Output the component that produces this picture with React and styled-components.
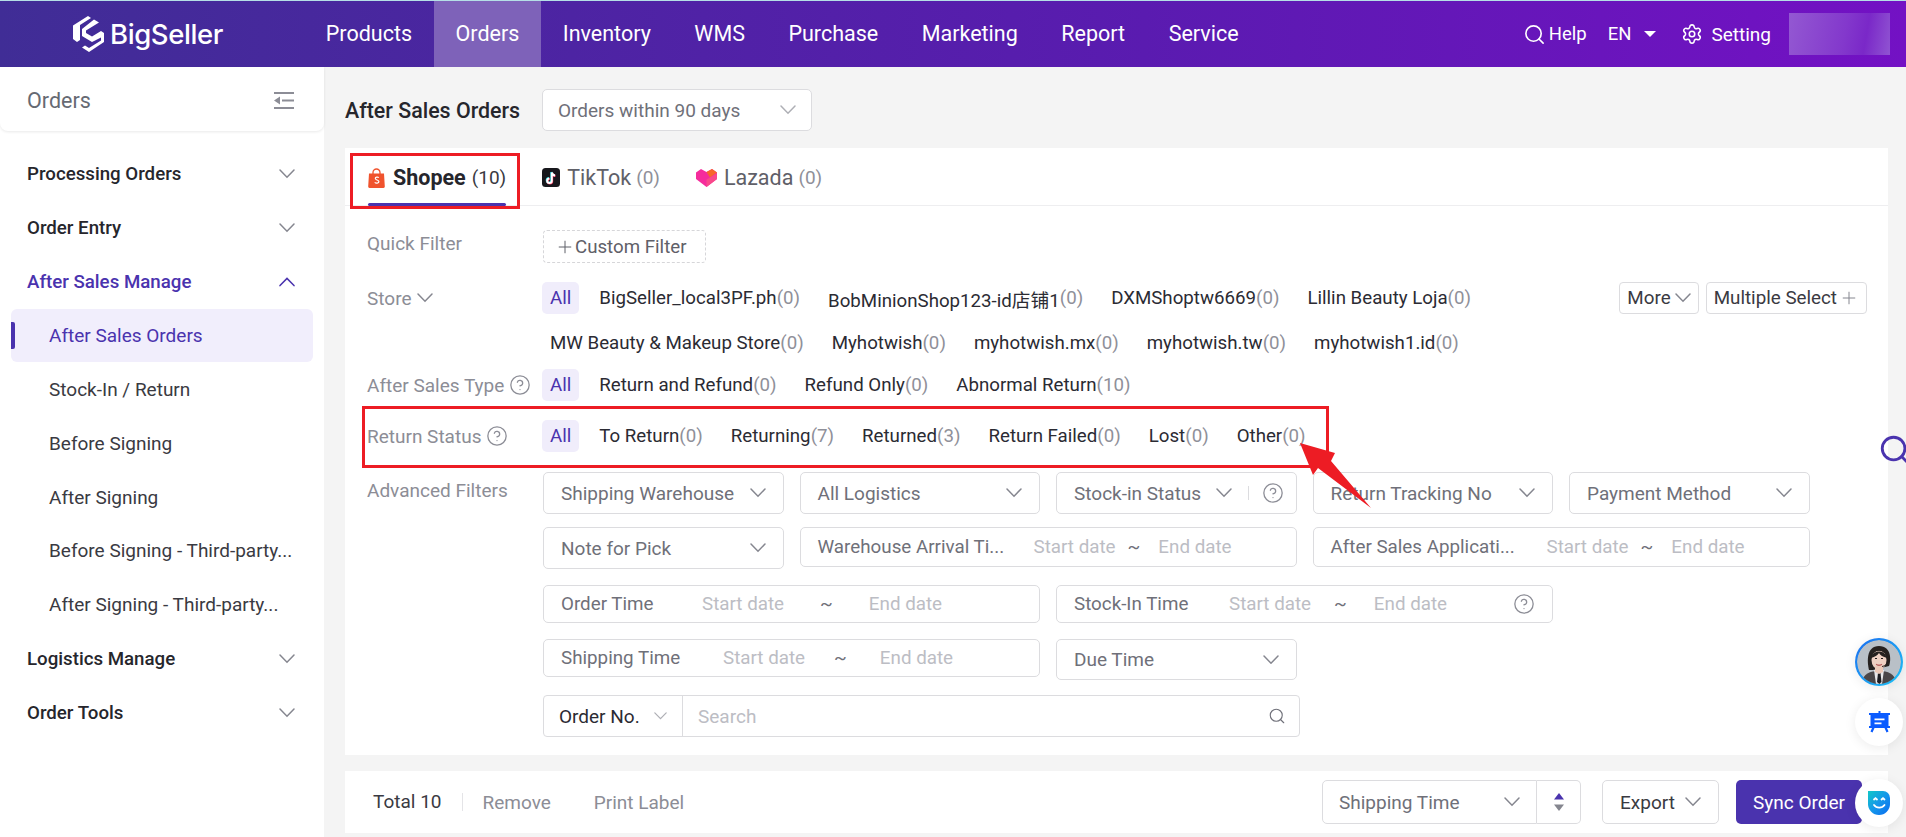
import React from 'react';
import styled, { createGlobalStyle } from 'styled-components';
import { Search, Settings, CircleHelp, Plus } from 'lucide-react';

const GlobalStyle = createGlobalStyle`
  html, body {
    margin: 0;
    padding: 0;
    background: #f4f4f4;
    font-family: Roboto, "Noto Sans CJK SC", sans-serif;
    font-size: 19px;
    color: #2b2b33;
  }
  * {
    box-sizing: border-box;
  }
`;

const Page = styled.div`
  position: relative;
  width: 1906px;
  height: 837px;
  overflow: hidden;
  background: #f4f4f4;
`;

const Header = styled.header`
  display: flex;
  align-items: stretch;
  height: 67px;
  border-top: 1px solid #b5dfe6;
  background: linear-gradient(90deg, #402d96 0%, #5a1bb0 60%, #7311c4 100%);
  color: #fff;
`;

const Logo = styled.div`
  display: flex;
  align-items: center;
  gap: 6px;
  width: 304px;
  padding: 0 0 0 73px;
`;

const LogoText = styled.span`
  font-family: Inter, sans-serif;
  font-size: 27.5px;
  font-weight: 500;
  letter-spacing: -0.4px;
  color: #fff;
`;

const Nav = styled.nav`
  display: flex;
  flex: 1;
`;

const NavItem = styled.a`
  display: flex;
  align-items: center;
  padding: 0 21.75px 2px;
  font-size: 21.5px;
  color: #fff;
  background: ${(p) => (p.$active ? '#7e62b9' : 'transparent')};
`;

const HeaderRight = styled.div`
  display: flex;
  align-items: center;
  padding-right: 16px;
`;

const HeaderLink = styled.span`
  display: flex;
  align-items: center;
  gap: ${(p) => p.$gap || 5}px;
  margin-right: ${(p) => p.$mr || 0}px;
  font-size: ${(p) => p.$size || 18.5}px;
`;

const Caret = styled.i`
  width: 0;
  height: 0;
  margin-left: 8px;
  border-left: 6px solid transparent;
  border-right: 6px solid transparent;
  border-top: 6px solid #fff;
`;

const Blurred = styled.div`
  width: 101px;
  height: 42px;
  background: linear-gradient(100deg, #9358d2 0%, #8338cc 55%, #7a28c8 75%, #9054d2 100%);
`;

const Body = styled.div`
  display: flex;
  height: 770px;
`;

const Sidebar = styled.aside`
  width: 324px;
  flex-shrink: 0;
  background: #fff;
`;

const SideHead = styled.div`
  display: flex;
  align-items: center;
  justify-content: space-between;
  height: 64px;
  padding: 2px 30px 0 27px;
  border-radius: 0 0 8px 8px;
  box-shadow: 0 1px 3px rgba(0, 0, 0, 0.09);
  font-size: 21.5px;
  color: #666a73;
`;

const SideMenu = styled.div`
  padding-top: 16px;
`;

const MenuGroup = styled.div`
  display: flex;
  align-items: center;
  justify-content: space-between;
  height: 54px;
  padding: 0 29px 0 27px;
  font-size: 18.7px;
  font-weight: 500;
  color: ${(p) => (p.$open ? '#4a33ae' : '#26262c')};
`;

const MenuItem = styled.div`
  position: relative;
  display: flex;
  align-items: center;
  height: 53px;
  margin: 0 11px 0.85px;
  padding-left: 38px;
  border-radius: 6px;
  font-size: 19px;
  color: ${(p) => (p.$active ? '#4a33ae' : '#3a3a42')};
  background: ${(p) => (p.$active ? '#f1eefc' : 'transparent')};

  &::before {
    content: '';
    display: ${(p) => (p.$active ? 'block' : 'none')};
    position: absolute;
    left: 0;
    top: 13px;
    width: 4px;
    height: 27px;
    border-radius: 0 2px 2px 0;
    background: #4a33ae;
  }
`;

const Content = styled.main`
  flex: 1;
  padding: 22px 18px 0 21px;
`;

const TitleRow = styled.div`
  display: flex;
  align-items: center;
  height: 42px;
  margin-bottom: 17px;
`;

const Title = styled.h1`
  width: 197px;
  margin: 0;
  font-size: 21.4px;
  font-weight: 500;
  color: #26262c;
  white-space: nowrap;
`;

const Select = styled.div`
  display: flex;
  align-items: center;
  justify-content: space-between;
  flex-shrink: 0;
  width: ${(p) => p.$width || 'auto'};
  height: ${(p) => p.$height || 42}px;
  padding: 0 ${(p) => p.$pad || 17}px;
  border: 1px solid #dcdcdf;
  border-radius: ${(p) => (p.$joined ? '5px 0 0 5px' : '5px')};
  background: #fff;
  font-size: 19px;
  color: ${(p) => p.$color || '#6f7079'};
  white-space: nowrap;
`;

const Card = styled.section`
  background: #fff;
  height: 607px;
  margin-bottom: 16px;
`;

const Tabs = styled.div`
  display: flex;
  height: 58px;
  padding-left: 23px;
  border-bottom: 1px solid #eeeef0;
`;

const Tab = styled.div`
  position: relative;
  display: flex;
  align-items: center;
  gap: ${(p) => (p.$active ? 8 : 7)}px;
  padding-top: 2px;
  margin-right: ${(p) => p.$mr}px;
  font-size: 21.5px;
  font-weight: ${(p) => (p.$active ? 700 : 400)};
  color: ${(p) => (p.$active ? '#26262c' : '#5f6068')};

  &::after {
    content: '';
    display: ${(p) => (p.$active ? 'block' : 'none')};
    position: absolute;
    left: 0;
    right: 0;
    bottom: -1px;
    height: 3px;
    border-radius: 2px;
    background: #4a33ae;
  }
`;

const TabCount = styled.span`
  margin-left: -2px;
  font-size: 19px;
  font-weight: 400;
  color: ${(p) => (p.$active ? '#3a3a42' : '#8f9099')};
`;

const Filters = styled.div`
  padding: 0 0 0 22px;
`;

const FilterRow = styled.div`
  display: flex;
  align-items: flex-start;
  margin-top: ${(p) => p.$top}px;
`;

const Label = styled.div`
  display: flex;
  align-items: center;
  gap: 5px;
  flex-shrink: 0;
  width: 175px;
  height: ${(p) => p.$height || 32}px;
  font-size: 19px;
  color: #8c8d96;
`;

const Options = styled.div`
  display: flex;
  flex-wrap: wrap;
  flex: 1;
  gap: 13px 12px;
`;

const Option = styled.span`
  display: flex;
  align-items: center;
  height: 32px;
  padding: 0 8px;
  border-radius: 5px;
  font-size: 18.7px;
  white-space: nowrap;
  color: ${(p) => (p.$active ? '#4a33ae' : '#2b2b33')};
  background: ${(p) => (p.$active ? '#f0edfb' : 'transparent')};
`;

const Count = styled.span`
  color: #8f9099;
`;

const DashedButton = styled.div`
  display: flex;
  align-items: center;
  height: 33px;
  margin-left: 1px;
  padding: 0 18px 0 11px;
  border: 1px dashed #d6d6d9;
  border-radius: 4px;
  font-size: 18.7px;
  color: #5f6068;
`;

const StoreActions = styled.div`
  display: flex;
  gap: 7px;
  margin-right: 21px;
`;

const SmallButton = styled.div`
  display: flex;
  align-items: center;
  gap: ${(p) => p.$gap || 2}px;
  height: 32px;
  padding: 0 7px;
  border: 1px solid #dcdcdf;
  border-radius: 4px;
  font-size: 18.8px;
  color: #3a3a42;
  white-space: nowrap;
`;

const AdvancedRow = styled.div`
  display: flex;
  margin-top: 20px;
`;

const AdvancedGrid = styled.div`
  display: grid;
  grid-template-columns: repeat(5, 240.5px);
  grid-template-rows: 55px 58px 54px 56px 42px;
  column-gap: 16px;
  margin-left: 1px;
  align-items: start;
`;

const DateField = styled.div`
  grid-column: span 2;
  display: flex;
  align-items: center;
  height: ${(p) => p.$height}px;
  padding: 0 17px;
  border: 1px solid #dcdcdf;
  border-radius: 5px;
  font-size: 18.8px;
  white-space: nowrap;
`;

const DateLabel = styled.span`
  flex-shrink: 0;
  width: ${(p) => p.$width}px;
  color: #6f7079;
`;

const Placeholder = styled.span`
  color: #bcbdc4;
`;

const Tilde = styled.span`
  margin: 0 ${(p) => p.$after}px 0 ${(p) => p.$before}px;
  color: #6f7079;
`;

const HelpSlot = styled.span`
  display: flex;
  margin-left: auto;
  color: #8c8d96;
`;

const StockSelect = styled.div`
  display: flex;
  align-items: center;
  height: 42px;
  padding: 0 0 0 17px;
  border: 1px solid #dcdcdf;
  border-radius: 5px;
  font-size: 19px;
  color: #6f7079;
  white-space: nowrap;
`;

const StockChevron = styled.span`
  display: flex;
  margin-left: 15px;
`;

const TinyDivider = styled.i`
  width: 1px;
  height: 14px;
  margin: 0 13px 0 16px;
  background: #dcdcdf;
`;

const SearchBar = styled.div`
  grid-column: span 3;
  display: flex;
  align-items: center;
  width: 757px;
  height: 42px;
  border: 1px solid #dcdcdf;
  border-radius: 4px;
  font-size: 19px;
`;

const SearchType = styled.div`
  display: flex;
  align-items: center;
  justify-content: space-between;
  width: 139px;
  height: 100%;
  padding: 0 15px;
  border-right: 1px solid #dcdcdf;
  color: #2b2b33;
`;

const SearchInput = styled.div`
  display: flex;
  align-items: center;
  justify-content: space-between;
  flex: 1;
  padding: 0 13px 0 15px;
  color: #bcbdc4;
`;

const Toolbar = styled.section`
  display: flex;
  align-items: center;
  height: 62px;
  padding: 0 26px 0 28px;
  background: #fff;
  font-size: 19px;
`;

const Total = styled.span`
  padding-right: 20px;
  margin-right: 20px;
  color: #3a3a42;
  border-right: 1px solid #e4e4e7;
  line-height: 18px;
`;

const ToolbarLink = styled.span`
  margin-right: 43px;
  color: #8c8d96;
`;

const ToolbarRight = styled.div`
  display: flex;
  align-items: center;
  margin-left: auto;
`;

const SortBox = styled.div`
  display: flex;
  align-items: center;
  justify-content: center;
  width: 44px;
  height: 44px;
  margin-right: 21px;
  border: 1px solid #dcdcdf;
  border-left: 0;
  border-radius: 0 5px 5px 0;
`;

const ExportButton = styled(Select)`
  width: 117px;
  height: 44px;
  margin-right: 17px;
  color: #3a3a42;
`;

const SyncButton = styled.button`
  width: 126px;
  height: 44px;
  padding: 0 0 0 17px;
  border: 0;
  border-radius: 5px;
  background: #4a33ae;
  font-family: inherit;
  font-size: 19px;
  color: #fff;
  text-align: left;
`;

const RedBox = styled.div`
  position: absolute;
  left: ${(p) => p.$x}px;
  top: ${(p) => p.$y}px;
  width: ${(p) => p.$w}px;
  height: ${(p) => p.$h}px;
  border: 3px solid #ed1c24;
`;

const ArrowSvg = styled.svg`
  position: absolute;
  left: 1290px;
  top: 435px;
`;

const PageSearch = styled.div`
  position: absolute;
  left: 1878px;
  top: 433px;
  color: #4a33ae;
`;

const Floating = styled.div`
  position: absolute;
  left: ${(p) => p.$x}px;
  top: ${(p) => p.$y}px;
  display: flex;
  align-items: center;
  justify-content: center;
  width: 48px;
  height: 48px;
  border-radius: 50%;
  background: #fff;
  box-shadow: 0 2px 12px rgba(0, 0, 0, 0.08);
  overflow: hidden;
`;

const AvatarRing = styled(Floating)`
  background: linear-gradient(135deg, #1a6cf0, #1fc4f5);
  padding: 2px;
`;

const AvatarSvg = styled.svg`
  border-radius: 50%;
  filter: blur(0.4px);
`;

const ChevronSvg = styled.svg`
  flex-shrink: 0;
  fill: none;
  stroke: ${(p) => p.$color || '#85868f'};
  stroke-width: 1.5;
  stroke-linecap: round;
`;

const Chevron = ({ w = 16, color, up }) => (
  <ChevronSvg $color={color} width={w} height={w * 0.6} viewBox="0 0 16 9.6">
    <path d={up ? 'M1 8.6 8 1.4l7 7.2' : 'M1 1l7 7.2L15 1'} />
  </ChevronSvg>
);

const LogoMark = () => (
  <svg width="31" height="36" viewBox="0 0 31 36">
    <path fill="#fff" d="M15 0 18 2 7 9v15l-3 2-4-3V9.500Z" />
    <path fill="#fff" d="M21 3.500 26 6.500 13 14.500v2.500l6 3.500L28 15l3 2v9l-15 10-7-4.500 3-2 4 2.500 12-7.500v-3L19 26l-10-6V13Z" />
  </svg>
);

const ShopeeIcon = () => (
  <svg width="17" height="20" viewBox="0 0 17 20">
    <path fill="none" stroke="#f0532d" strokeWidth="1.3" d="M5 6V4.500a3.500 3.500 0 0 1 7 0V6" />
    <path fill="#f0532d" d="M1 5.500h15l.8 13a1.300 1.300 0 0 1-1.300 1.400h-14A1.300 1.300 0 0 1 .2 18.500Z" />
    <path fill="none" stroke="#fff" strokeWidth="1.2" d="M10.800 9.700c-.8-.9-3.400-1-3.500.7-.1 1.900 3.700 1.300 3.600 3.400-.1 1.700-3 1.800-4.200.6" />
  </svg>
);

const TiktokIcon = () => (
  <svg width="18" height="19" viewBox="0 0 18 19">
    <rect width="18" height="19" rx="3.500" fill="#17171c" />
    <path fill="none" stroke="#25d8e0" strokeWidth="2" d="M9.300 4v8.200a2.300 2.300 0 1 1-2.400-2.300M9.300 4c.3 1.900 1.500 3 3.400 3.200" />
    <path fill="none" stroke="#fe2c55" strokeWidth="2" d="M10.200 5v8.200a2.300 2.300 0 1 1-2.400-2.300M10.200 5c.3 1.800 1.500 2.800 3.300 3" />
    <path fill="none" stroke="#fff" strokeWidth="2" d="M9.800 4.500v8.200a2.300 2.300 0 1 1-2.400-2.300M9.800 4.500c.3 1.900 1.500 2.900 3.300 3.100" />
  </svg>
);

const LazadaIcon = () => (
  <svg width="21" height="19" viewBox="0 0 21 19">
    <path fill="#f52c9c" d="M0 4.500 5 1l5.500 3L16 1l5 3.500V11L10.500 19 0 11Z" />
    <path fill="#f7662a" d="M10.500 4 16 1l5 3.500-7 5Z" />
    <path fill="#f9488a" d="M10.500 11.500 21 5.500V11L10.500 19Z" />
  </svg>
);

const Avatar = () => (
  <AvatarSvg width="44" height="44" viewBox="0 0 44 44">
    <circle cx="22" cy="22" r="22" fill="#b9c0c7" />
    <path fill="#4a4648" d="M5 42c1-8 8-11 17-11s16 3 17 11l-17 4Z" />
    <path fill="#e8e8ea" d="M17 30h10l-2 14h-6Z" />
    <path fill="#1d1d22" d="M21 33h2.500l1 9-2.200 2-2.300-2Z" />
    <path fill="#26211f" d="M12 30c-2-8-3-24 10-24s12 15 10 20l-4 1-12 3Z" />
    <ellipse cx="22" cy="20" rx="7.500" ry="9.500" fill="#efd0c2" />
    <path fill="#ecc9b8" d="M18 26h8v6l-4 2-4-2Z" />
    <path fill="#26211f" d="M14 18c1-5 5-7 9-6.500 4 .5 6 3 7 6.500-4-1-7-3-8-5-2 3-5 4-8 5Z" />
    <path fill="none" stroke="#b9615f" strokeWidth="1.300" strokeLinecap="round" d="M19.500 24.500c1.600 1 3.400 1 5 0" />
    <path fill="none" stroke="#26211f" strokeWidth="1" d="M18 18.500h2M24 18.500h2M13 20c-1-13 19-13 18 0M31 20c0 4-3 6-6 6.500" />
  </AvatarSvg>
);

const NoticeIcon = () => (
  <svg width="21" height="22" viewBox="0 0 21 22">
    <path fill="#0a5bff" d="M0 2h21v2h-1.500v11H21v2H0v-2h1.500V4H0Z" />
    <path fill="#0a5bff" d="M9.500 0h2v2h-2ZM3 17h2.500l-2 4.500-2-1ZM15.500 17H18l1.500 3.500-2 1Z" />
    <path fill="#fff" d="M5.500 7.500h10v1.800h-10ZM5.500 11.500h7v1.800h-7Z" />
  </svg>
);

const SmileIcon = () => (
  <svg width="22" height="24" viewBox="0 0 22 24">
    <defs>
      <linearGradient id="smileFill" x1="0" y1="0" x2="1" y2="1">
        <stop offset="0" stopColor="#12c8c8" />
        <stop offset="0.5" stopColor="#1597ea" />
        <stop offset="1" stopColor="#0a6cf0" />
      </linearGradient>
    </defs>
    <path fill="url(#smileFill)" d="M0 0h15a7 7 0 0 1 7 7v6a11 11 0 0 1-22 0Z" />
    <path fill="none" stroke="#fff" strokeWidth="1.800" strokeLinecap="round" d="M6 14c2.500 3.500 8 3.500 10.500 0M6 8.500l1.500-1.300L9 8.500M13.500 8.500l1.500-1.300 1.500 1.300" />
  </svg>
);

const SortIcon = () => (
  <svg width="12" height="20" viewBox="0 0 12 20">
    <path fill="#4a33ae" d="M6 1l5 6.500H1Z" />
    <path fill="#85868f" d="M1 12.500h10L6 19Z" />
  </svg>
);

const ArrowMark = () => (
  <ArrowSvg width="90" height="80" viewBox="1290 435 90 80">
    <path fill="#ed1c24" d="M1300 443 1335 453 1331 461 1371 508 1318 468 1313 475Z" />
  </ArrowSvg>
);

const MenuToggle = () => (
  <svg width="20" height="17" viewBox="0 0 20 17">
    <path fill="#8c8d96" d="M0 0h20v2H0ZM0 15h20v2H0ZM8 7.500h12v2H8ZM6 4.500v8L0 8.500Z" />
  </svg>
);

const stores = [
  ['BigSeller_local3PF.ph', 0],
  ['BobMinionShop123-id店铺1', 0],
  ['DXMShoptw6669', 0],
  ['Lillin Beauty Loja', 0],
  ['MW Beauty & Makeup Store', 0],
  ['Myhotwish', 0],
  ['myhotwish.mx', 0],
  ['myhotwish.tw', 0],
  ['myhotwish1.id', 0],
];
const afterSalesTypes = [['Return and Refund', 0], ['Refund Only', 0], ['Abnormal Return', 10]];
const returnStatus = [
  ['To Return', 0],
  ['Returning', 7],
  ['Returned', 3],
  ['Return Failed', 0],
  ['Lost', 0],
  ['Other', 0],
];

const OptionList = ({ items }) => (
  <Options>
    <Option $active>All</Option>
    {items.map(([name, n]) => (
      <Option key={name}>
        {name}
        <Count>({n})</Count>
      </Option>
    ))}
  </Options>
);

const DateRange = ({ label, labelWidth, before, after, height, children }) => (
  <DateField $height={height}>
    <DateLabel $width={labelWidth}>{label}</DateLabel>
    <Placeholder>Start date</Placeholder>
    <Tilde $before={before} $after={after}>~</Tilde>
    <Placeholder>End date</Placeholder>
    {children}
  </DateField>
);

export default function App() {
  return (
    <Page>
      <GlobalStyle />
      <Header>
        <Logo>
          <LogoMark />
          <LogoText>BigSeller</LogoText>
        </Logo>
        <Nav>
          <NavItem>Products</NavItem>
          <NavItem $active>Orders</NavItem>
          <NavItem>Inventory</NavItem>
          <NavItem>WMS</NavItem>
          <NavItem>Purchase</NavItem>
          <NavItem>Marketing</NavItem>
          <NavItem>Report</NavItem>
          <NavItem>Service</NavItem>
        </Nav>
        <HeaderRight>
          <HeaderLink $mr={21} $gap={3}>
            <Search size={23} strokeWidth={1.7} />
            Help
          </HeaderLink>
          <HeaderLink $mr={25}>
            EN
            <Caret />
          </HeaderLink>
          <HeaderLink $mr={18} $gap={8} $size={19}>
            <Settings size={22} strokeWidth={1.7} />
            Setting
          </HeaderLink>
          <Blurred />
        </HeaderRight>
      </Header>
      <Body>
        <Sidebar>
          <SideHead>
            Orders
            <MenuToggle />
          </SideHead>
          <SideMenu>
            <MenuGroup>
              Processing Orders
              <Chevron />
            </MenuGroup>
            <MenuGroup>
              Order Entry
              <Chevron />
            </MenuGroup>
            <MenuGroup $open>
              After Sales Manage
              <Chevron up color="#4a33ae" />
            </MenuGroup>
            <MenuItem $active>After Sales Orders</MenuItem>
            <MenuItem>Stock-In / Return</MenuItem>
            <MenuItem>Before Signing</MenuItem>
            <MenuItem>After Signing</MenuItem>
            <MenuItem>Before Signing - Third-party...</MenuItem>
            <MenuItem>After Signing - Third-party...</MenuItem>
            <MenuGroup>
              Logistics Manage
              <Chevron />
            </MenuGroup>
            <MenuGroup>
              Order Tools
              <Chevron />
            </MenuGroup>
          </SideMenu>
        </Sidebar>
        <Content>
          <TitleRow>
            <Title>After Sales Orders</Title>
            <Select $width="270px" $pad={15}>
              Orders within 90 days
              <Chevron color="#aeafb5" />
            </Select>
          </TitleRow>
          <Card>
            <Tabs>
              <Tab $active $mr={36}>
                <ShopeeIcon />
                Shopee
                <TabCount $active>(10)</TabCount>
              </Tab>
              <Tab $mr={36}>
                <TiktokIcon />
                TikTok
                <TabCount>(0)</TabCount>
              </Tab>
              <Tab>
                <LazadaIcon />
                Lazada
                <TabCount>(0)</TabCount>
              </Tab>
            </Tabs>
            <Filters>
              <FilterRow $top={24}>
                <Label $height={26}>Quick Filter</Label>
                <DashedButton>
                  <Plus size={20} strokeWidth={1.2} />
                  Custom Filter
                </DashedButton>
              </FilterRow>
              <FilterRow $top={19}>
                <Label>
                  Store
                  <Chevron />
                </Label>
                <OptionList items={stores} />
                <StoreActions>
                  <SmallButton $gap={4}>
                    More
                    <Chevron />
                  </SmallButton>
                  <SmallButton>
                    Multiple Select
                    <Plus size={20} strokeWidth={1.2} color="#85868f" />
                  </SmallButton>
                </StoreActions>
              </FilterRow>
              <FilterRow $top={10}>
                <Label>
                  After Sales Type
                  <CircleHelp size={22} strokeWidth={1.4} />
                </Label>
                <OptionList items={afterSalesTypes} />
              </FilterRow>
              <FilterRow $top={19}>
                <Label>
                  Return Status
                  <CircleHelp size={22} strokeWidth={1.4} />
                </Label>
                <OptionList items={returnStatus} />
              </FilterRow>
              <AdvancedRow>
                <Label $height={36}>Advanced Filters</Label>
                <AdvancedGrid>
                  <Select>
                    Shipping Warehouse
                    <Chevron />
                  </Select>
                  <Select>
                    All Logistics
                    <Chevron />
                  </Select>
                  <StockSelect>
                    Stock-in Status
                    <StockChevron>
                      <Chevron />
                    </StockChevron>
                    <TinyDivider />
                    <CircleHelp size={22} strokeWidth={1.4} color="#8c8d96" />
                  </StockSelect>
                  <Select>
                    Return Tracking No
                    <Chevron />
                  </Select>
                  <Select>
                    Payment Method
                    <Chevron />
                  </Select>

                  <Select>
                    Note for Pick
                    <Chevron />
                  </Select>
                  <DateRange label="Warehouse Arrival Ti..." labelWidth={216} before={12} after={18} height={40} />
                  <DateRange label="After Sales Applicati..." labelWidth={216} before={12} after={18} height={40} />

                  <DateRange label="Order Time" labelWidth={141} before={36} after={36} height={38} />
                  <DateRange label="Stock-In Time" labelWidth={155} before={23} after={27} height={38}>
                    <HelpSlot>
                      <CircleHelp size={22} strokeWidth={1.4} />
                    </HelpSlot>
                  </DateRange>

                  <DateRange label="Shipping Time" labelWidth={162} before={29} after={33} height={38} />
                  <Select $height={41}>
                    Due Time
                    <Chevron />
                  </Select>
                  <span />
                  <span />

                  <SearchBar>
                    <SearchType>
                      Order No.
                      <Chevron w={13} color="#aeafb5" />
                    </SearchType>
                    <SearchInput>
                      Search
                      <Search size={18} strokeWidth={1.5} color="#6f7079" />
                    </SearchInput>
                  </SearchBar>
                </AdvancedGrid>
              </AdvancedRow>
            </Filters>
          </Card>
          <Toolbar>
            <Total>Total 10</Total>
            <ToolbarLink>Remove</ToolbarLink>
            <ToolbarLink>Print Label</ToolbarLink>
            <ToolbarRight>
              <Select $width="215px" $height={44} $pad={16} $joined>
                Shipping Time
                <Chevron />
              </Select>
              <SortBox>
                <SortIcon />
              </SortBox>
              <ExportButton>
                Export
                <Chevron />
              </ExportButton>
              <SyncButton>Sync Order</SyncButton>
            </ToolbarRight>
          </Toolbar>
        </Content>
      </Body>
      <RedBox $x={350} $y={153} $w={170} $h={56} />
      <RedBox $x={362} $y={406} $w={967} $h={62} />
      <ArrowMark />
      <PageSearch>
        <Search size={34} strokeWidth={2} />
      </PageSearch>
      <AvatarRing $x={1855} $y={638}>
        <Avatar />
      </AvatarRing>
      <Floating $x={1855} $y={698}>
        <NoticeIcon />
      </Floating>
      <Floating $x={1855} $y={779}>
        <SmileIcon />
      </Floating>
    </Page>
  );
}
